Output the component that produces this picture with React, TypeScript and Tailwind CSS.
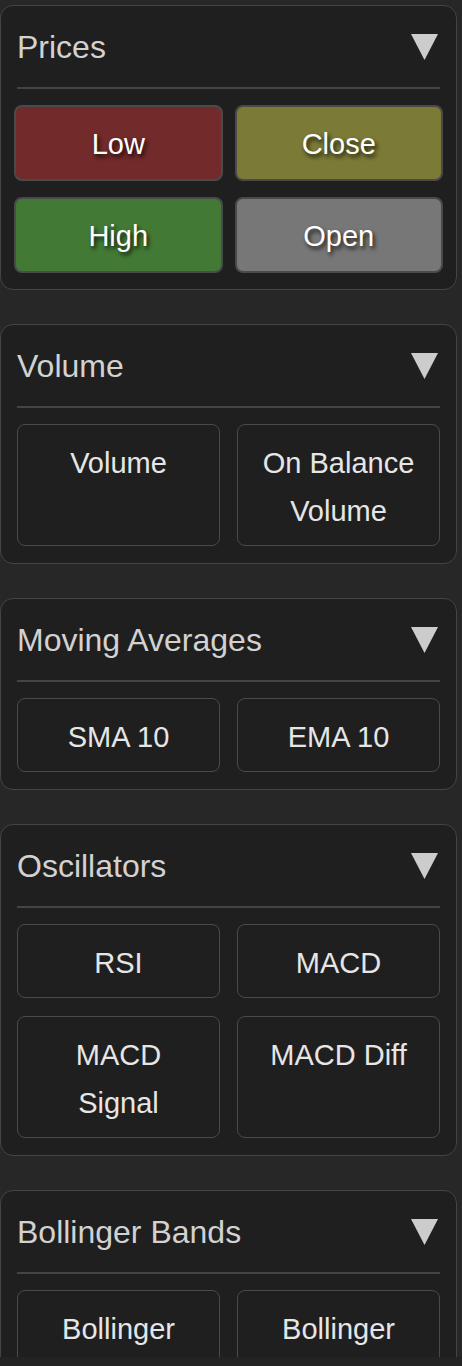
import React from "react";

type Btn = { label: string; color?: string };

const priceButtons: Btn[] = [
  { label: "Low", color: "bg-[#722a2a]" },
  { label: "Close", color: "bg-[#7b7a36]" },
  { label: "High", color: "bg-[#427a35]" },
  { label: "Open", color: "bg-[#777777]" },
];

const groups: { title: string; buttons: string[] }[] = [
  { title: "Volume", buttons: ["Volume", "On Balance Volume"] },
  { title: "Moving Averages", buttons: ["SMA 10", "EMA 10"] },
  { title: "Oscillators", buttons: ["RSI", "MACD", "MACD Signal", "MACD Diff"] },
  { title: "Bollinger Bands", buttons: ["Bollinger High Band", "Bollinger Low Band"] },
];

function Caret() {
  return (
    <svg width="27" height="26" viewBox="0 0 27 26" className="shrink-0">
      <polygon points="0,0 27,0 13.5,26" fill="#cccccc" />
    </svg>
  );
}

function Panel({ title, children }: { title: string; children: React.ReactNode }) {
  return (
    <section className="w-[457px] rounded-[13px] border border-[#444444] bg-[#1f1f1f]">
      <header className="flex h-[81px] items-center justify-between pl-[16px] pr-[18px] pt-[1px]">
        <h2 className="text-[32px] leading-none text-[#d2d2d2]">{title}</h2>
        <Caret />
      </header>
      <div className="mx-[16px] h-[2px] bg-[#444444]" />
      {children}
    </section>
  );
}

export default function App() {
  return (
    <div
      className="flex h-screen flex-col overflow-hidden bg-[#232323]"
      style={{ fontFamily: '"Liberation Sans", Arial, Helvetica, sans-serif' }}
    >
      {/* side panel list, clipped like a scroll area */}
      <div className="h-[1357px] shrink-0 overflow-hidden bg-[#272727] pt-[5px]">
        <div className="flex flex-col gap-[34px] pb-8">
          <Panel title="Prices">
            <div className="grid grid-cols-2 gap-x-[12px] gap-y-[16px] px-[13px] pt-[16px] pb-[16px]">
              {priceButtons.map((b) => (
                <button
                  key={b.label}
                  className={`${b.color} rounded-[8px] border-2 border-[#4a4a4a] px-2 pt-[13px] pb-[11px] text-[29px] leading-[48px] text-white [text-shadow:2px_3px_4px_rgba(0,0,0,0.8)]`}
                >
                  {b.label}
                </button>
              ))}
            </div>
          </Panel>

          {groups.map((g) => (
            <Panel key={g.title} title={g.title}>
              <div className="grid grid-cols-2 gap-x-[17px] gap-y-[18px] px-[16px] pt-[16px] pb-[17px]">
                {g.buttons.map((label) => (
                  <button
                    key={label}
                    className="flex items-start justify-center rounded-[8px] border border-[#4a4a4a] bg-[#1f1f1f] px-[18px] pt-[14px] pb-[10px] text-center text-[29px] leading-[48px] text-[#e6e6e6]"
                  >
                    {label}
                  </button>
                ))}
              </div>
            </Panel>
          ))}
        </div>
      </div>
    </div>
  );
}
